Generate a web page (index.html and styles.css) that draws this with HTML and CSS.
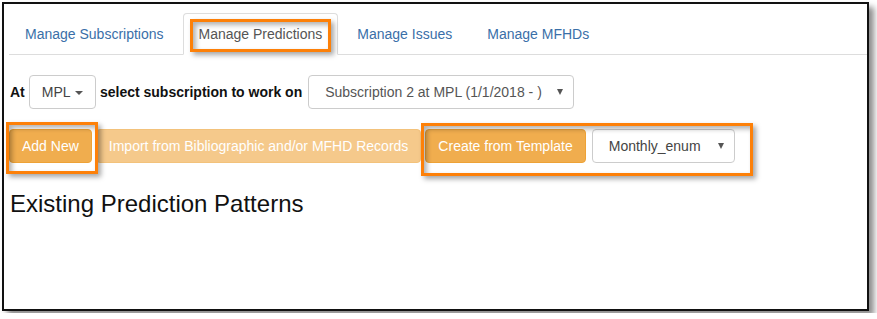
FILE: index.html
```html
<!DOCTYPE html>
<html lang="en">

<head>
  <meta charset="UTF-8">
  <title>Manage Predictions</title>
  <link rel="stylesheet" href="styles.css">
</head>

<body>
  <div id="frame">
    <ul class="nav-tabs">
      <li><a href="#">Manage Subscriptions</a></li>
      <li class="active"><a href="#">Manage Predictions</a></li>
      <li><a href="#">Manage Issues</a></li>
      <li><a href="#">Manage MFHDs</a></li>
    </ul>

    <div class="picker-row">
      <span class="label">At</span>
      <button class="btn btn-default">MPL <span class="caret"></span></button>
      <span class="label">select subscription to work on</span>
      <div class="fake-select" id="subscription-select">
        <span>Subscription 2 at MPL (1/1/2018 - )</span>
        <span class="select-arrow"></span>
      </div>
    </div>

    <div class="action-row">
      <button class="btn btn-warning">Add New</button>
      <button class="btn btn-warning" disabled>Import from Bibliographic and/or MFHD Records</button>
      <button class="btn btn-warning">Create from Template</button>
      <div class="fake-select" id="template-select">
        <span>Monthly_enum</span>
        <span class="select-arrow"></span>
      </div>
    </div>

    <h3 id="patterns-title">Existing Prediction Patterns</h3>

    <!-- orange call-outs drawn over the screenshot -->
    <div class="callout" id="callout-tab"></div>
    <div class="callout" id="callout-add"></div>
    <div class="callout" id="callout-template"></div>
  </div>
</body>

</html>
```

FILE: styles.css
```css
body {
  margin: 0;
  background-color: white;
  font-family: "Liberation Sans", Arial, sans-serif;
  font-size: 14px;
  color: #333;
}

#frame {
  position: relative;
  box-sizing: border-box;
  width: 867px;
  height: 309px;
  margin: 2px;
  border: 2px solid #111;
  background-color: white;
  box-shadow: 5px 5px 6px rgba(0, 0, 0, 0.45);
  padding: 9px 0 0 5px;
}

.nav-tabs {
  display: flex;
  list-style: none;
  margin: 0;
  padding: 0;
  border-bottom: 1px solid #ddd;
}

.nav-tabs li {
  margin-right: 3px;
  margin-bottom: -1px;
}

.nav-tabs a {
  display: block;
  padding: 10px 15px;
  line-height: 20px;
  border: 1px solid transparent;
  border-radius: 4px 4px 0 0;
  color: #3a6fa8;
  text-decoration: none;
}

.nav-tabs .active a {
  color: #555;
  background-color: white;
  border-color: #ddd #ddd transparent;
}

.picker-row,
.action-row {
  display: flex;
  align-items: center;
}

.picker-row {
  margin-top: 20px;
  padding-left: 1px;
  gap: 4px;
}

.action-row {
  margin-top: 20px;
  gap: 4px;
}

.label {
  font-weight: bold;
  color: #111;
}

.btn {
  box-sizing: border-box;
  height: 34px;
  padding: 6px 12px;
  font-family: inherit;
  font-size: 14px;
  line-height: 20px;
  border: 1px solid transparent;
  border-radius: 4px;
  white-space: nowrap;
}

.btn-default {
  color: #444;
  background-color: white;
  border-color: #ccc;
}

.btn-warning {
  color: white;
  background-color: #f0ad4e;
  border-color: #eea236;
}

.btn-warning:disabled {
  opacity: 0.65;
}

.caret {
  display: inline-block;
  width: 0;
  height: 0;
  margin-left: 1px;
  vertical-align: middle;
  border-top: 4px solid #555;
  border-right: 4px solid transparent;
  border-left: 4px solid transparent;
}

.fake-select {
  box-sizing: border-box;
  display: flex;
  align-items: center;
  justify-content: space-between;
  height: 34px;
  padding: 0 10px 0 16px;
  border: 1px solid #ccc;
  border-radius: 4px;
  color: #555;
  background-color: white;
}

#subscription-select {
  width: 266px;
  margin-left: 2px;
}

#template-select {
  width: 143px;
  margin-left: 2px;
  color: #444;
}

.select-arrow {
  width: 0;
  height: 0;
  border-top: 6px solid #555;
  border-right: 3.5px solid transparent;
  border-left: 3.5px solid transparent;
}

#patterns-title {
  margin: 28px 0 0 1px;
  font-size: 24px;
  font-weight: normal;
  line-height: 1.1;
  color: #111;
}

.callout {
  position: absolute;
  box-sizing: border-box;
  border: 3px solid #fd8008;
  box-shadow: 3px 3px 5px rgba(0, 0, 0, 0.35), inset 3px 3px 5px rgba(0, 0, 0, 0.3);
}

#callout-tab {
  left: 186px;
  top: 15px;
  width: 141px;
  height: 33px;
}

#callout-add {
  left: 2px;
  top: 118px;
  width: 92px;
  height: 52px;
}

#callout-template {
  left: 417px;
  top: 119px;
  width: 332px;
  height: 53px;
}
```
